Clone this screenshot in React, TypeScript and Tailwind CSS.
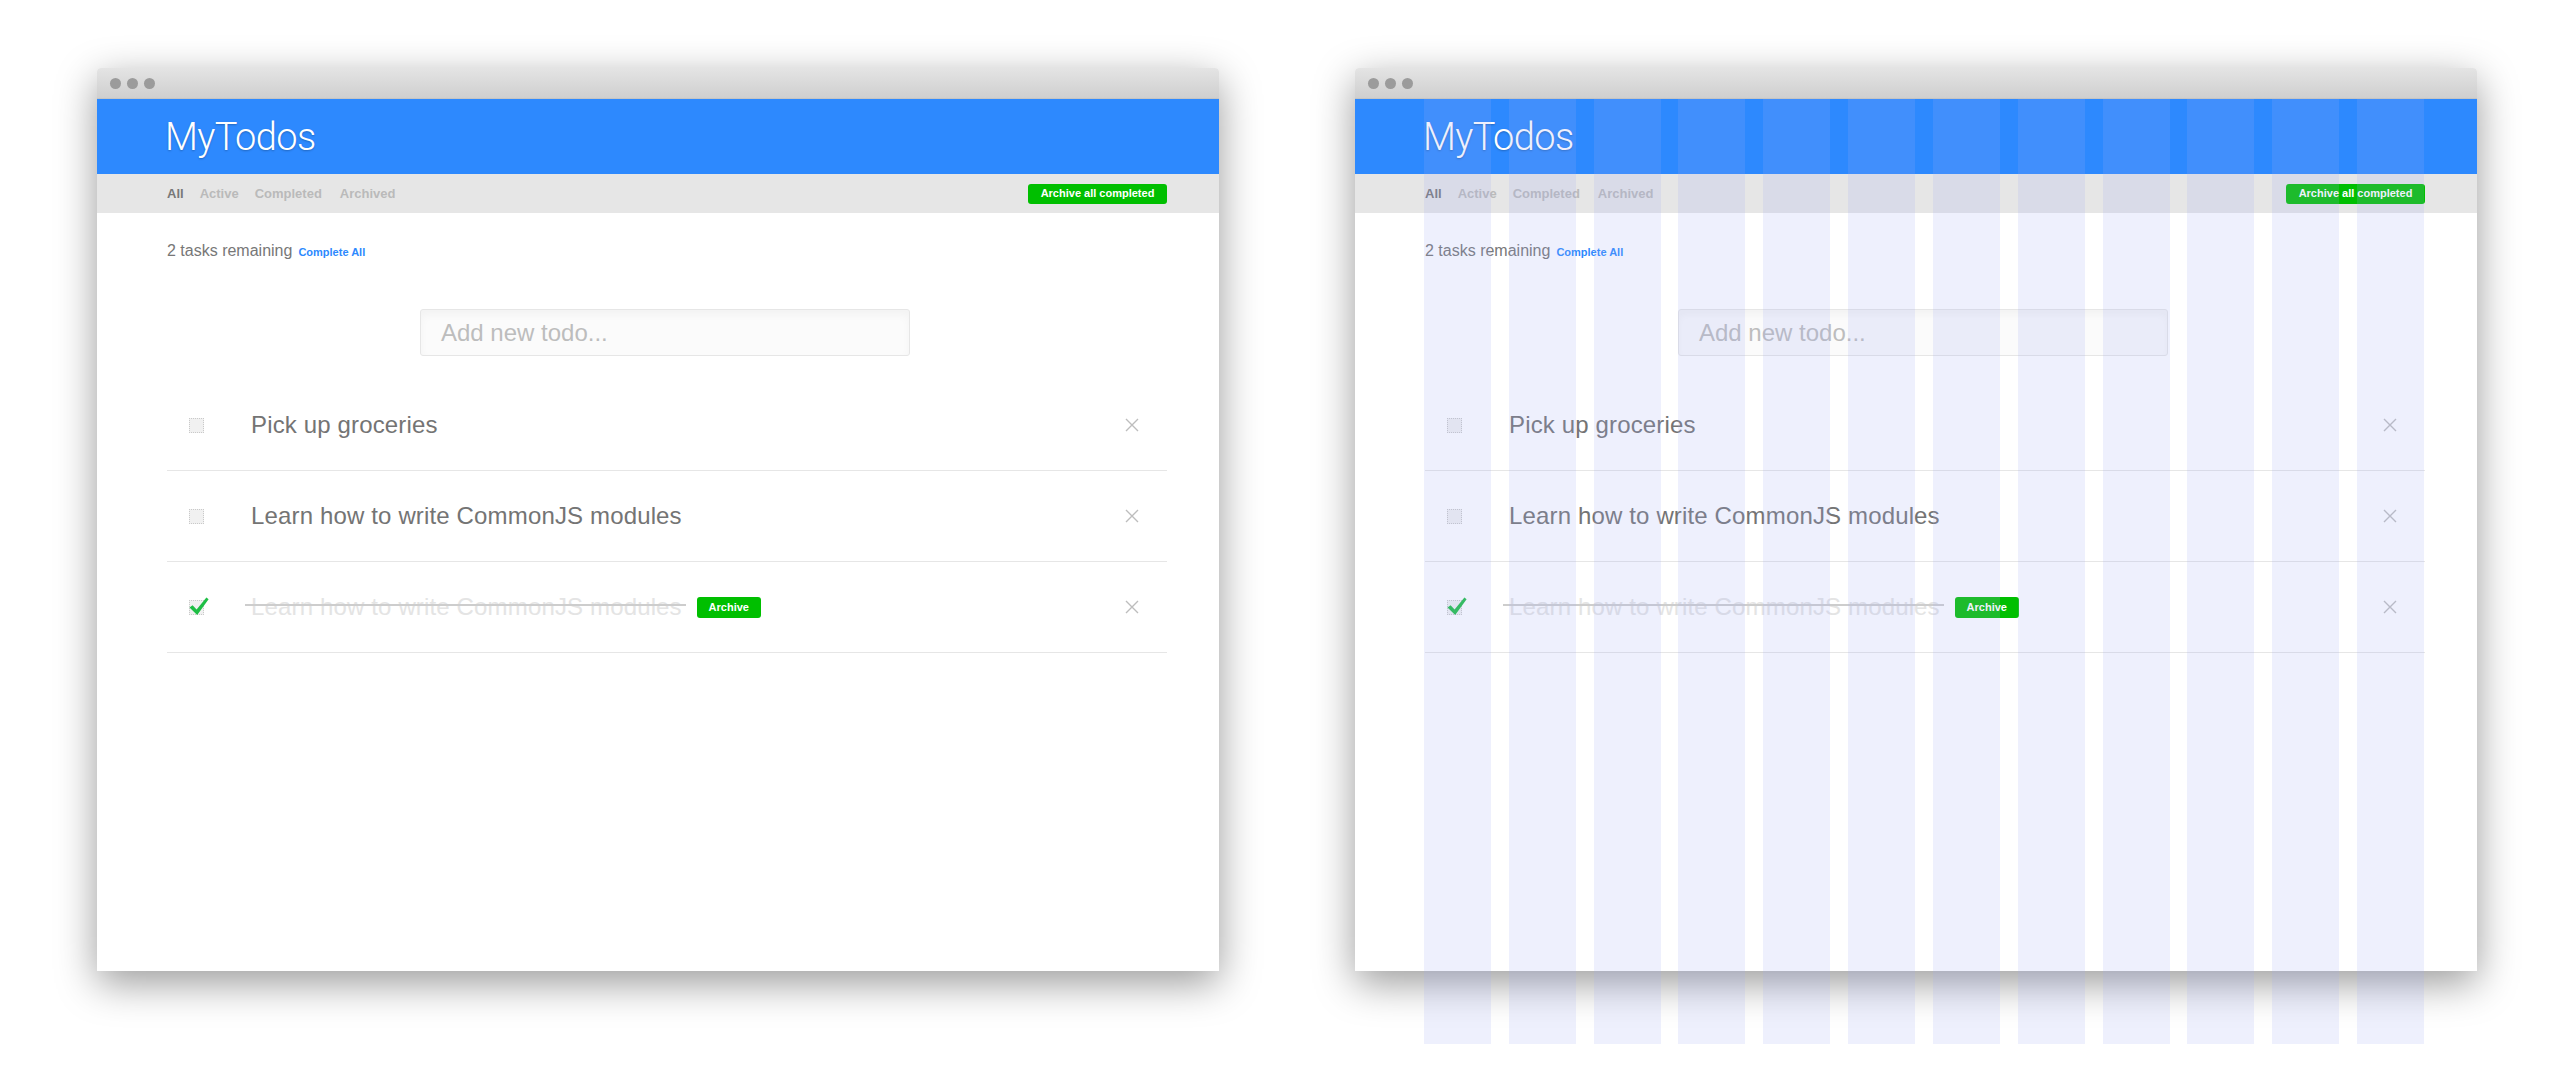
import { ReactNode } from 'react';

type Todo = { id: number; title: string; done: boolean };

const todos: Todo[] = [
  { id: 1, title: 'Pick up groceries', done: false },
  { id: 2, title: 'Learn how to write CommonJS modules', done: false },
  { id: 3, title: 'Learn how to write CommonJS modules', done: true },
];

const CloseIcon = () => (
  <svg width="14" height="14" viewBox="0 0 14 14" className="block">
    <path d="M1 1 L13 13 M13 1 L1 13" stroke="#bdbdbd" strokeWidth="1.4" fill="none" />
  </svg>
);

const CheckMark = () => (
  <svg width="20" height="19" viewBox="0 0 20 19" className="absolute -left-[1px] -top-[4px]">
    <path d="M0.5 10.5 L3.6 8.2 L7.6 12.6 L17.4 0.6 L19.6 2.2 L8.2 18 Z" fill="#1fbe45" />
  </svg>
);

const TodoRow = ({ todo }: { todo: Todo }) => (
  <div className="flex h-[91px] items-center border-b border-[#e6e6e6]">
    <div className="w-[84px] shrink-0 pl-[22px]">
      <div className="relative h-[15px] w-[15px] border border-dotted border-[#c9c9c9] bg-[#f1f1f1]">
        {todo.done && <CheckMark />}
      </div>
    </div>
    {todo.done ? (
      <div className="flex items-center">
        <span className="relative text-[24px] tracking-[0.15px] text-[#e4e4e4]">
          {todo.title}
          <span className="absolute -left-[6px] -right-[4px] top-[15px] h-[2px] bg-[#cdcdcd]" />
        </span>
        <span className="ml-[15px] flex h-[21px] w-[64px] items-center justify-center rounded-[3px] bg-[#00bf00] text-[11px] font-bold text-white">
          Archive
        </span>
      </div>
    ) : (
      <span className="text-[24px] tracking-[0.15px] text-[#747474]">{todo.title}</span>
    )}
    <div className="ml-auto mr-[28px]">
      <CloseIcon />
    </div>
  </div>
);

const GridOverlay = () => (
  <div className="pointer-events-none absolute left-[69px] top-[31px] grid h-[945px] w-[1000px] grid-cols-12 gap-x-[17.8px]">
    {Array.from({ length: 12 }).map((_, i) => (
      <div key={i} className="bg-[rgba(160,174,245,0.18)]" />
    ))}
  </div>
);

const BrowserWindow = ({ children, overlay }: { children: ReactNode; overlay?: boolean }) => (
  <div className="relative w-[1122px] shrink-0">
    <div className="flex h-[903px] flex-col overflow-hidden rounded-t-[4px] bg-white shadow-[0_12px_40px_rgba(0,0,0,0.4)]">
      <div className="flex h-[31px] shrink-0 items-center gap-[6px] border-b border-[#c4c4c4] bg-gradient-to-b from-[#e4e4e4] to-[#cfcfcf] pl-[13px]">
        <span className="h-[11px] w-[11px] rounded-full bg-[#9b9b9b]" />
        <span className="h-[11px] w-[11px] rounded-full bg-[#9b9b9b]" />
        <span className="h-[11px] w-[11px] rounded-full bg-[#9b9b9b]" />
      </div>
      {children}
    </div>
    {overlay && <GridOverlay />}
  </div>
);

const TodoApp = () => (
  <div className="flex flex-1 flex-col font-['Liberation_Sans',Arial,sans-serif]">
    <div className="flex h-[75px] shrink-0 items-center bg-[#2d89fe] pl-[68px]">
      <h1 className="font-['Roboto',sans-serif] text-[38px] font-light leading-none tracking-[-0.6px] text-white [text-shadow:0_1px_2px_rgba(0,0,0,0.25)]">
        MyTodos
      </h1>
    </div>
    <div className="flex h-[39px] shrink-0 items-center bg-[#e6e6e6] pl-[70px] pr-[52px]">
      <nav className="flex gap-[16px] text-[13px] font-bold">
        <a className="text-[#787878]">All</a>
        <a className="text-[#bababa]">Active</a>
        <a className="text-[#bababa]">Completed</a>
        <a className="ml-[2px] text-[#bababa]">Archived</a>
      </nav>
      <button className="ml-auto flex h-[20px] w-[139px] items-center justify-center rounded-[3px] bg-[#00bf00] text-[11px] font-bold text-white">
        Archive all completed
      </button>
    </div>
    <div className="pl-[70px] pr-[52px]">
      <div className="mt-[26px] flex h-[20px] items-baseline">
        <span className="text-[16px] text-[#777]">2 tasks remaining</span>
        <a className="ml-[6px] text-[11px] font-bold text-[#2d89fe]">Complete All</a>
      </div>
      <div className="mt-[50px] flex justify-center pr-[4px]">
        <div className="flex h-[47px] w-[490px] items-center rounded-[3px] border border-[#e6e6e6] bg-[#fbfbfb] pl-[20px] shadow-[inset_0_5px_8px_rgba(0,0,0,0.035)]">
          <span className="text-[24px] text-[#bdbdbd]">Add new todo...</span>
        </div>
      </div>
      <div className="mt-[24px]">
        {todos.map((t) => (
          <TodoRow key={t.id} todo={t} />
        ))}
      </div>
    </div>
  </div>
);

export default function App() {
  return (
    <div className="h-[1088px] w-[2550px] overflow-hidden bg-white">
      <div className="flex gap-[136px] pl-[97px] pt-[68px]">
        <BrowserWindow>
          <TodoApp />
        </BrowserWindow>
        <BrowserWindow overlay>
          <TodoApp />
        </BrowserWindow>
      </div>
    </div>
  );
}
